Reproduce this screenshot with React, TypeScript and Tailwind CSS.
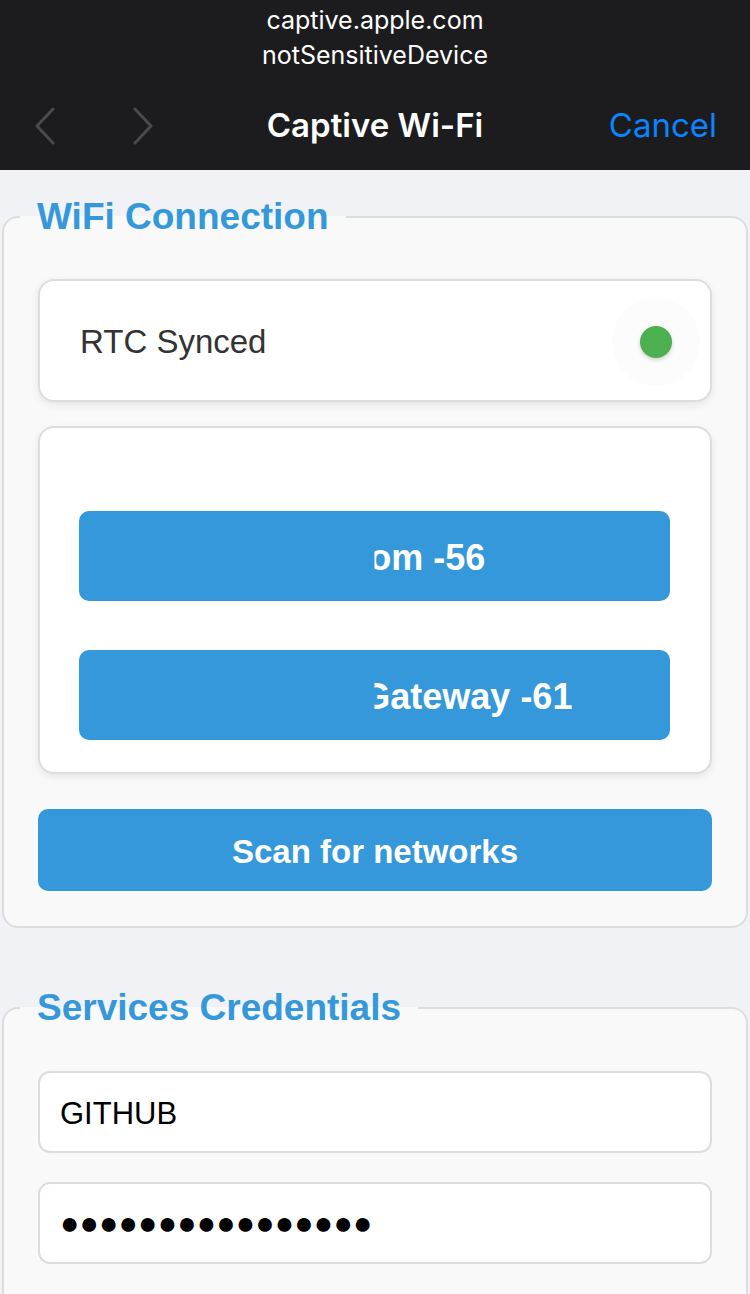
import React from "react";

const NETWORKS = [
  { name: "Vodacom", rssi: -56 },
  { name: "HomeWiFi Gateway", rssi: -61 },
];

function Chevron({ dir }: { dir: "left" | "right" }) {
  return (
    <svg width="24" height="38" viewBox="0 0 24 38" fill="none">
      <polyline
        points={dir === "left" ? "20,2 4,19 20,36" : "4,2 20,19 4,36"}
        stroke="#4a4a4e"
        strokeWidth="3"
        strokeLinecap="round"
        strokeLinejoin="round"
      />
    </svg>
  );
}

export default function App() {
  return (
    <div className="min-h-screen bg-[#f0f2f5] font-['Liberation_Sans',Arial,sans-serif]">
      {/* Captive sheet header */}
      <header className="h-[170px] bg-[#1c1c1e] font-['Inter',sans-serif] text-white">
        <div className="pt-[3px] text-center text-[25px] leading-[35px]">
          <div>captive.apple.com</div>
          <div>notSensitiveDevice</div>
        </div>
        <div className="relative mt-[18px] flex h-[70px] items-center px-[33px]">
          <div className="flex items-center gap-[74px]">
            <Chevron dir="left" />
            <Chevron dir="right" />
          </div>
          <div className="absolute inset-x-0 text-center text-[33px] font-semibold">Captive Wi-Fi</div>
          <button className="relative ml-auto text-[33px] text-[#0a84ff]">Cancel</button>
        </div>
      </header>

      <main className="px-[2px] pt-[27px]">
        {/* WiFi */}
        <fieldset className="rounded-[16px] border-2 border-[#ddd] bg-[#f9f9f9] px-[34px] pb-[35px] pt-[42px]">
          <legend className="-ml-[18px] px-[17px] text-[37px] font-bold leading-[40px] text-[#3498db]">
            WiFi Connection
          </legend>

          <div className="flex h-[123px] items-center justify-between rounded-[16px] border-2 border-[#ddd] bg-white pb-[2px] pl-[40px] pr-[10px] pt-[4px] shadow-[0_3px_8px_rgba(0,0,0,0.08)]">
            <span className="text-[33px] text-[#333]">RTC Synced</span>
            <div className="flex h-[88px] w-[88px] items-center justify-center rounded-full bg-[#fcfcfc]">
              <div className="h-[32px] w-[32px] rounded-full bg-[#4caf50] shadow-[0_2px_4px_rgba(0,0,0,0.18)]" />
            </div>
          </div>

          <div className="mt-[24px] flex flex-col gap-[49px] rounded-[16px] border-2 border-[#ddd] bg-white pb-[32px] pl-[39px] pr-[40px] pt-[83px] shadow-[0_3px_8px_rgba(0,0,0,0.08)]">
            {NETWORKS.map((n) => (
              <button key={n.name} className="relative h-[90px] rounded-[10px] bg-[#3498db] text-white">
                <span className="absolute inset-0 flex items-center justify-center whitespace-nowrap pt-[4px] text-[36px] font-bold [clip-path:inset(0_0_0_50%)]">
                  {n.name} {n.rssi}
                </span>
              </button>
            ))}
          </div>

          <button className="mt-[35px] h-[82px] w-full rounded-[10px] bg-[#3498db] pt-[4px] text-[33px] font-bold text-white">
            Scan for networks
          </button>
        </fieldset>

        {/* Credentials */}
        <fieldset className="mt-[60px] rounded-[16px] border-2 border-[#ddd] bg-[#f9f9f9] px-[34px] pb-[60px] pt-[43px]">
          <legend className="-ml-[18px] px-[17px] text-[37px] font-bold leading-[40px] text-[#3498db]">
            Services Credentials
          </legend>
          <div className="flex flex-col gap-[29px]">
            <input
              readOnly
              value="GITHUB"
              className="h-[82px] w-full rounded-[12px] border-2 border-[#ddd] bg-white px-[20px] pt-[4px] text-[31px] text-black outline-none"
            />
            <div className="flex h-[82px] w-full items-center rounded-[12px] border-2 border-[#ddd] bg-white px-[20px] text-[32px] tracking-[0.2px] text-black">
              ●●●●●●●●●●●●●●●●
            </div>
          </div>
        </fieldset>
      </main>
    </div>
  );
}
